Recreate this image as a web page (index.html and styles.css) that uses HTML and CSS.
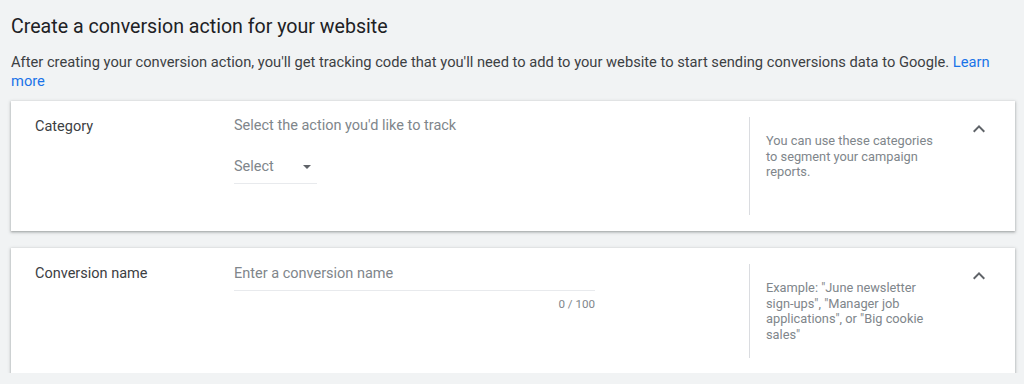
FILE: index.html
```html
<!DOCTYPE html>
<html lang="en">
<head>
<meta charset="utf-8">
<title>Create a conversion action</title>
<link rel="stylesheet" href="styles.css">
</head>
<body>
<main class="page">
  <h1 class="title">Create a conversion action for your website</h1>
  <p class="intro">After creating your conversion action, you'll get tracking code that you'll need to add to your website to start sending conversions data to Google. <a class="link" href="#">Learn more</a></p>

  <section class="card">
    <div class="label">Category</div>
    <div class="main">
      <div class="prompt">Select the action you'd like to track</div>
      <div class="select">
        <span class="select-text">Select</span>
        <span class="caret"></span>
      </div>
    </div>
    <div class="help">
      <p class="help-text">You can use these categories to segment your campaign reports.</p>
    </div>
    <div class="toggle">
      <svg viewBox="0 0 24 24" width="24" height="24"><path d="M12 8l-6 6 1.41 1.41L12 10.83l4.59 4.58L18 14z" fill="#5f6368"/></svg>
    </div>
  </section>

  <section class="card card-name">
    <div class="label">Conversion name</div>
    <div class="main">
      <div class="input">
        <span class="placeholder">Enter a conversion name</span>
      </div>
      <div class="counter">0 / 100</div>
    </div>
    <div class="help help-name">
      <p class="help-text">Example: "June newsletter sign-ups", "Manager job applications", or "Big cookie sales"</p>
    </div>
    <div class="toggle">
      <svg viewBox="0 0 24 24" width="24" height="24"><path d="M12 8l-6 6 1.41 1.41L12 10.83l4.59 4.58L18 14z" fill="#5f6368"/></svg>
    </div>
  </section>
</main>
</body>
</html>
```
FILE: styles.css
```css
html, body {
  margin: 0;
  padding: 0;
  background: #f1f3f4;
}
body {
  font-family: Roboto, "Liberation Sans", Arial, sans-serif;
  color: #3c4043;
}
.page {
  padding: 0 9px 0 11px;
}
.title {
  margin: 0;
  padding-top: 15px;
  font-size: 19.6px;
  line-height: 24px;
  font-weight: 400;
  color: #202124;
}
.intro {
  margin: 14px 0 0;
  font-size: 14.7px;
  line-height: 19px;
  color: #3c4043;
}
.link {
  color: #1a73e8;
  text-decoration: none;
}
.card {
  display: flex;
  margin-top: 10px;
  padding: 16px 24px;
  background: #fff;
  box-shadow: 0 1px 2px rgba(60, 64, 67, 0.35), 0 1px 3px 1px rgba(60, 64, 67, 0.15);
}
.card-name {
  margin-top: 17px;
  padding-top: 16px;
  padding-bottom: 15px;
}
.label {
  flex: 0 0 199px;
  font-size: 14.5px;
  line-height: 20px;
  color: #3c4043;
}
.main {
  flex: 1;
}
.prompt {
  font-size: 14.5px;
  line-height: 20px;
  margin-top: -1px;
  color: #80868b;
}
.select {
  display: flex;
  align-items: center;
  justify-content: space-between;
  width: 83px;
  box-sizing: border-box;
  margin-top: 21px;
  margin-bottom: 31px;
  padding: 0 6px 6px 0;
  border-bottom: 1px solid #e8eaed;
}
.select-text {
  font-size: 14.5px;
  line-height: 20px;
  color: #80868b;
}
.caret {
  width: 0;
  height: 0;
  border-left: 4px solid transparent;
  border-right: 4px solid transparent;
  border-top: 4px solid #5f6368;
}
.input {
  width: 361px;
  margin-top: -1px;
  padding-bottom: 6px;
  border-bottom: 1px solid #e8eaed;
}
.placeholder {
  font-size: 14.5px;
  line-height: 20px;
  color: #80868b;
}
.counter {
  width: 361px;
  text-align: right;
  margin-top: 5px;
  font-size: 11.6px;
  line-height: 16px;
  color: #80868b;
}
.help {
  flex: 0 0 218px;
  box-sizing: border-box;
  border-left: 1px solid #dadce0;
  padding: 16px;
}
.help-name {
  padding-bottom: 15px;
}
.help-text {
  margin: 0;
  max-width: 172px;
  font-size: 12.8px;
  line-height: 15.7px;
  color: #80868b;
}
.toggle {
  flex: 0 0 24px;
  height: 24px;
}
.toggle svg {
  display: block;
}
```
